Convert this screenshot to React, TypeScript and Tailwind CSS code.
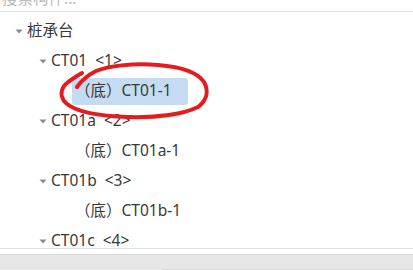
import React from "react";

type Node = {
  label: string;
  level: number;
  open?: boolean;
  leaf?: boolean;
  selected?: boolean;
};

const nodes: Node[] = [
  { label: "桩承台", level: 0, open: true },
  { label: "CT01  <1>", level: 1, open: true },
  { label: "（底）CT01-1", level: 2, leaf: true, selected: true },
  { label: "CT01a  <2>", level: 1, open: true },
  { label: "（底）CT01a-1", level: 2, leaf: true },
  { label: "CT01b  <3>", level: 1, open: true },
  { label: "（底）CT01b-1", level: 2, leaf: true },
  { label: "CT01c  <4>", level: 1, open: true },
];

const indent = ["pl-[14px]", "pl-[38px]", "pl-[62px]"];

function Caret() {
  return (
    <svg width="8" height="5" viewBox="0 0 8 5" className="block">
      <path d="M0.5 0.5 L7.5 0.5 L4 4.5 Z" fill="#8a8a8a" />
    </svg>
  );
}

function TreeRow({ node }: { node: Node }) {
  return (
    <div className={`flex h-[30px] items-center ${indent[node.level]}`}>
      <span className="flex w-[10px] items-center justify-center">
        {!node.leaf && <Caret />}
      </span>
      <span
        className={`flex h-[27px] items-center whitespace-pre rounded-[3px] pl-[3px] pr-[16px] ${
          node.selected ? "bg-[#c4dbf2]" : ""
        }`}
      >
        {node.label}
      </span>
    </div>
  );
}

export default function App() {
  return (
    <div
      className="relative flex h-[270px] w-[413px] flex-col overflow-hidden bg-white text-[15.5px] text-[#383838]"
      style={{ fontFamily: '"Noto Sans", "Noto Sans CJK SC", sans-serif' }}
    >
      {/* search box, scrolled partly out of view */}
      <div className="h-[12px] shrink-0 overflow-hidden border-b border-[#e2e2e2]">
        <div className="-mt-[12px] pl-[2px] leading-[20px] text-[#b8b8b8]">搜索构件...</div>
      </div>

      {/* tree */}
      <div className="flex-1 overflow-hidden pt-[4px]">
        {nodes.map((n, i) => (
          <TreeRow key={i} node={n} />
        ))}
      </div>

      {/* horizontal scrollbar */}
      <div className="h-[22px] shrink-0 border-t border-[#e0e0e0] pt-[5px]">
        <div className="flex h-full border-t border-[#dadada] bg-[#e6e6e6]">
          <div className="h-full w-[162px] border-b border-[#ececec]" />
          <div className="h-full flex-1 border-b border-[#d8d8d8]" />
        </div>
      </div>

      {/* red hand-drawn annotation */}
      <svg
        className="pointer-events-none absolute left-0 top-0"
        width="413"
        height="270"
        viewBox="0 0 413 270"
      >
        <path
          d="M82 73 C75 77 68 81 64 86 C60 92 61 99 67 104 C77 112 98 116 128 117 C158 118 184 114 198 107 C207 100 209 91 204 82 C198 73 183 67 158 65 C132 63 108 66 96 71 C88 75 82 80 77 87"
          fill="none"
          stroke="#e41b1f"
          strokeWidth="4"
          strokeLinecap="round"
          strokeLinejoin="round"
        />
      </svg>
    </div>
  );
}
